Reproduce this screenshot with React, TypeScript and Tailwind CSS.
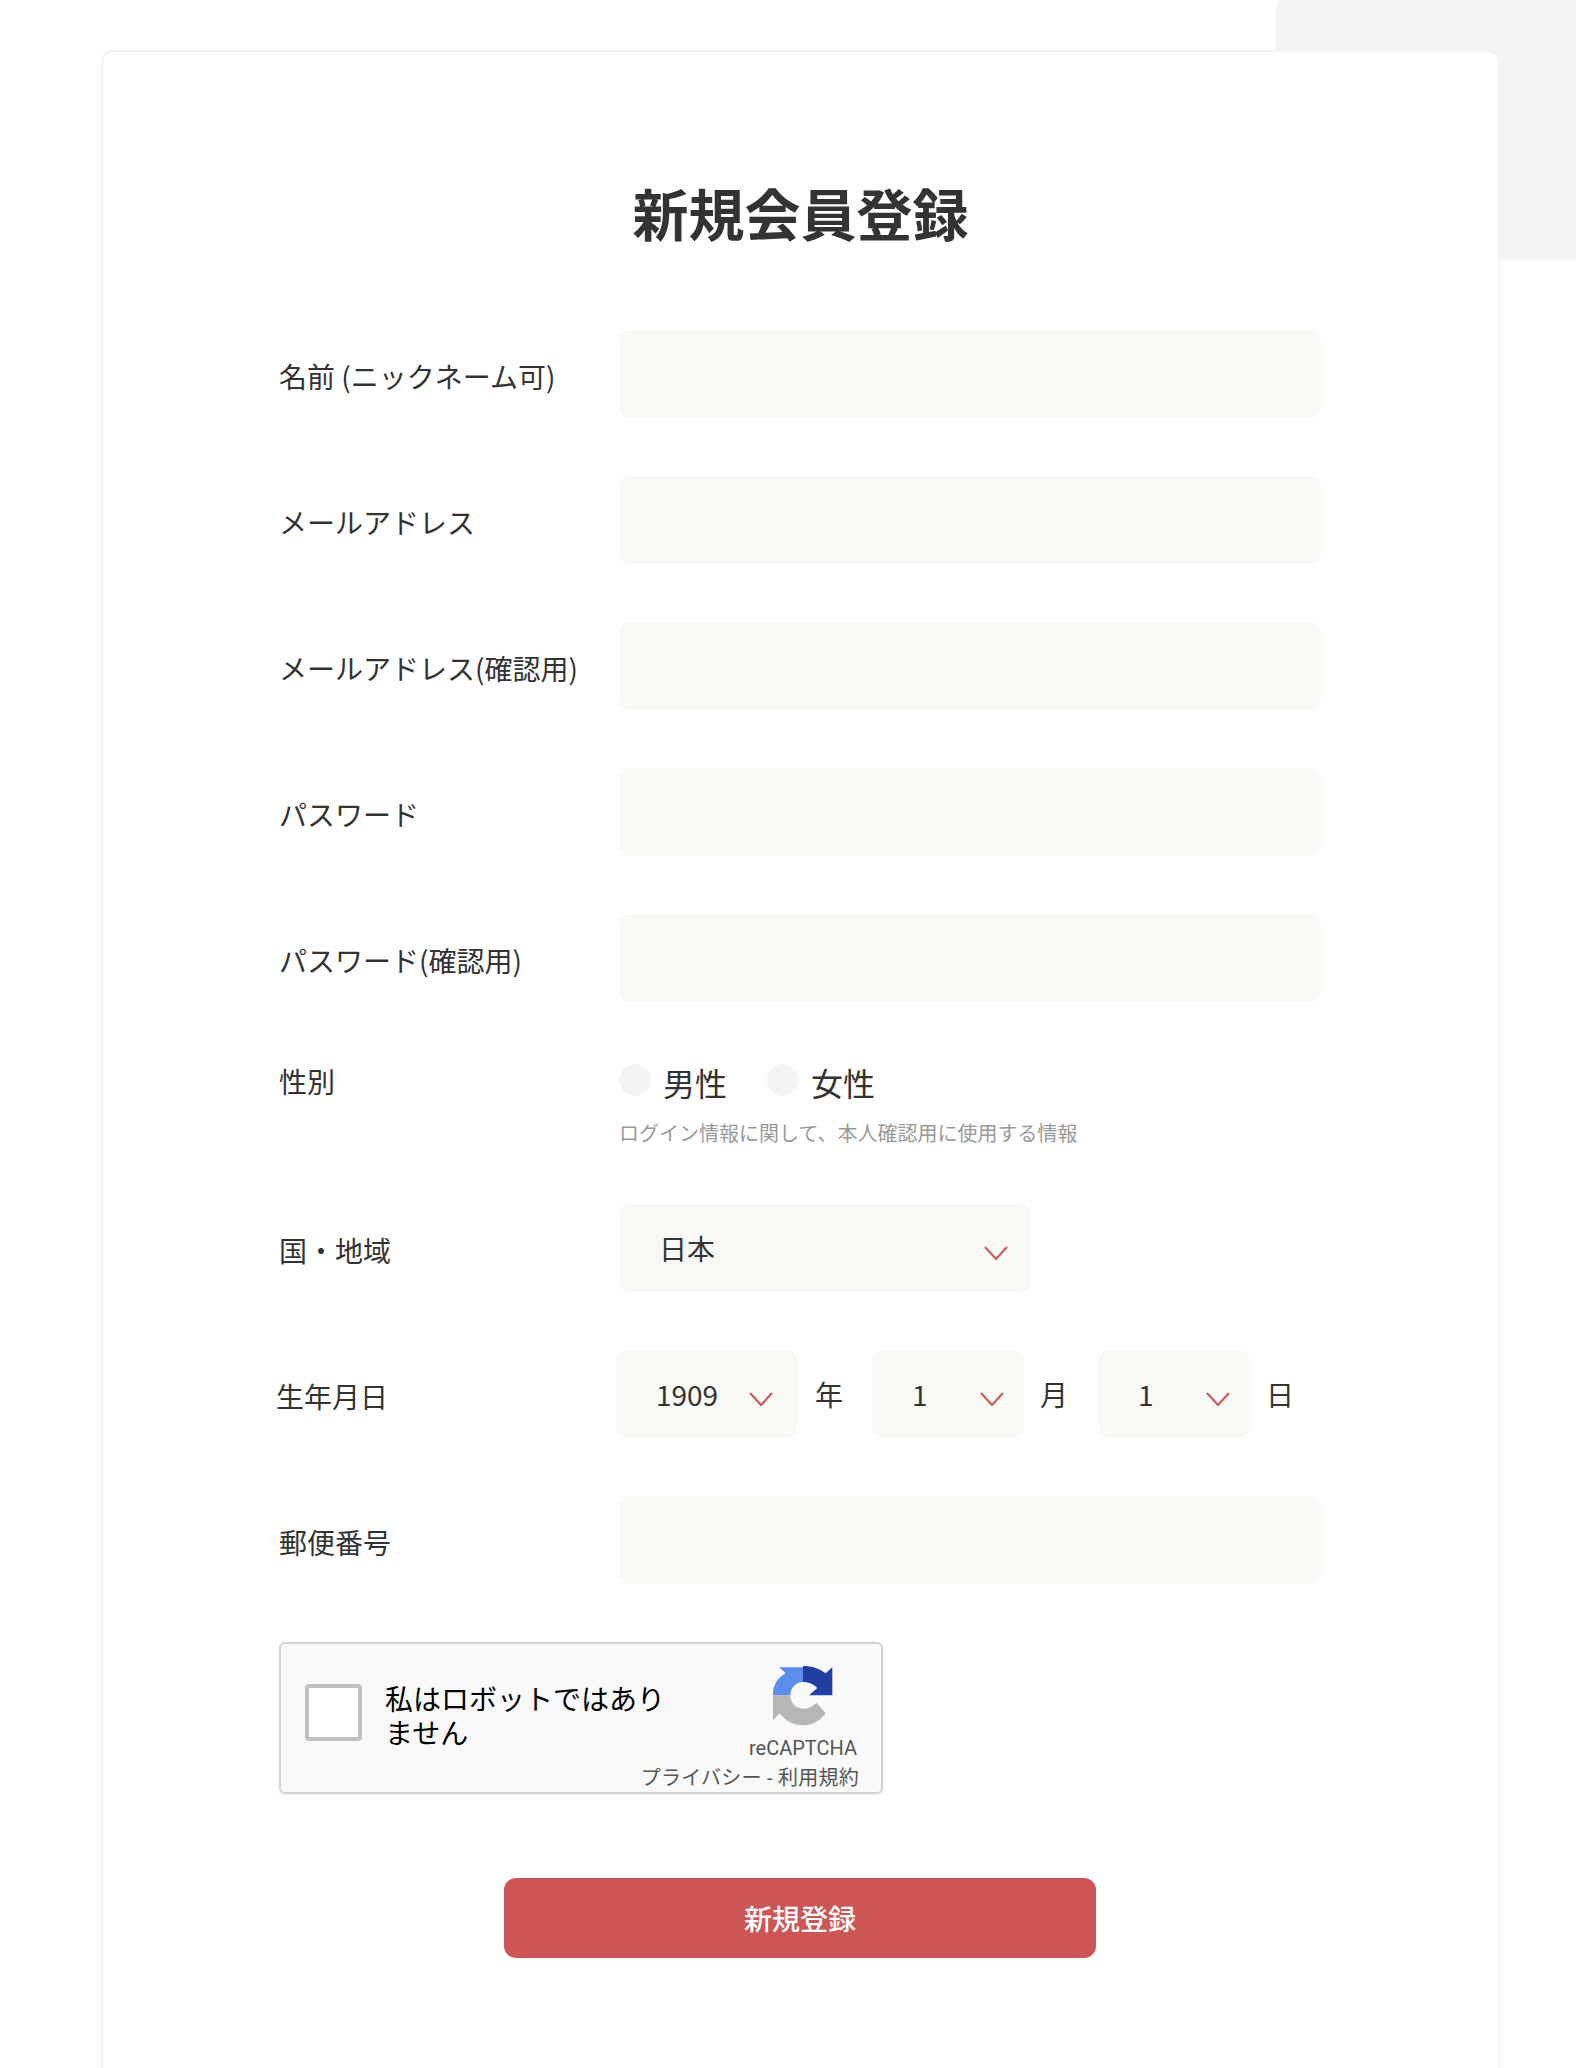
const inputClass = 'h-[88px] w-[702px] rounded-xl bg-[#f8f8f4] outline-none';
const selectClass =
    'relative flex h-[88px] items-center rounded-xl bg-[#f8f8f4] text-[28px] leading-none text-[#333]';

const Chevron = ({ className }: { className: string }) => (
    <svg viewBox="0 0 24 14" className={`absolute h-[14px] w-6 ${className}`} fill="none">
        <path d="M1 1l11 12L23 1" stroke="#cd5555" strokeWidth="2" />
    </svg>
);

const InputRow = ({ label }: { label: string }) => (
    <div className="mb-[58px] flex items-center">
        <label className="mt-[4px] w-[340px] text-[28px] leading-10 whitespace-nowrap">{label}</label>
        <input type="text" className={inputClass} />
    </div>
);

const Radio = ({ label, className }: { label: string; className: string }) => (
    <label className={`flex items-start ${className}`}>
        <input
            type="radio"
            name="gender"
            className="h-8 w-8 appearance-none rounded-full bg-[#f5f4f2]"
        />
        <span className="mt-[-4px] ml-3 text-[32px] leading-[44px]">{label}</span>
    </label>
);

const RecaptchaLogo = () => (
    <svg viewBox="160 50 180 180" className="h-[60px] w-[60px]">
        <path
            d="M160 138C160 110 170 88 198 72L178 54H250V98C228 98 212 116 212 138Z"
            fill="#5b8def"
        />
        <path
            d="M250 50C278 50 300 58 318 72L338 54V138H268L293 116C282 105 268 98 250 98Z"
            fill="#233ea2"
        />
        <path
            d="M160 138H212C212 162 228 178 250 178C266 178 280 172 290 160L318 192C300 216 278 228 250 228C222 228 198 216 180 192L160 212Z"
            fill="#b6b6b6"
        />
    </svg>
);

const App = () => {
    return (
        <div className="relative h-[2068px] overflow-hidden bg-white font-['Noto_Sans_CJK_JP','Noto_Sans',sans-serif] text-[#333]">
            <div className="absolute top-[-10px] right-0 h-[270px] w-[301px] rounded-tl-[24px] bg-[#f5f4f2]" />
            <main className="relative mt-[50px] ml-[101px] h-[2100px] w-[1399px] rounded-xl border-2 border-[#f5f4f2] bg-white pt-[126px] pl-[176px]">
                <h1 className="mb-[84px] ml-[-176px] text-center text-[56px] leading-[68px] font-bold">
                    新規会員登録
                </h1>

                <InputRow label="名前 (ニックネーム可)" />
                <InputRow label="メールアドレス" />
                <InputRow label="メールアドレス(確認用)" />
                <InputRow label="パスワード" />
                <InputRow label="パスワード(確認用)" />

                <div className="flex pt-[4px]">
                    <div className="mt-[-3px] w-[340px] text-[28px] leading-10">性別</div>
                    <div>
                        <div className="flex">
                            <Radio label="男性" className="w-[148px]" />
                            <Radio label="女性" className="" />
                        </div>
                        <p className="mt-[15px] text-[20px] leading-7 text-[#999]">
                            ログイン情報に関して、本人確認用に使用する情報
                        </p>
                    </div>
                </div>

                <div className="mt-[57px] mb-[58px] flex items-center">
                    <label className="mt-[4px] w-[340px] text-[28px] leading-10">国・地域</label>
                    <div className={`${selectClass} w-[412px] pl-[40px]`}>
                        日本
                        <Chevron className="top-[42px] right-[23px]" />
                    </div>
                </div>

                <div className="mb-[58px] ml-[-3px] flex items-center">
                    <label className="mt-[4px] w-[340px] text-[28px] leading-10">生年月日</label>
                    <div className={`${selectClass} w-[182px] pl-[40px]`}>
                        1909
                        <Chevron className="top-[42px] right-[25px]" />
                    </div>
                    <span className="w-[74px] pl-[17px] text-[28px]">年</span>
                    <div className={`${selectClass} w-[152px] pl-[40px]`}>
                        1
                        <Chevron className="top-[42px] right-[20px]" />
                    </div>
                    <span className="w-[74px] pl-[16px] text-[28px]">月</span>
                    <div className={`${selectClass} w-[152px] pl-[40px]`}>
                        1
                        <Chevron className="top-[42px] right-[20px]" />
                    </div>
                    <span className="pl-[16px] text-[28px]">日</span>
                </div>

                <InputRow label="郵便番号" />

                <div className="relative flex h-[152px] w-[604px] rounded-md border-2 border-[#d3d3d3] bg-[#f9f9f9] shadow-[0_1px_3px_rgba(0,0,0,0.08)]">
                    <div className="mt-[40px] ml-[24px] h-[57px] w-[57px] rounded border-4 border-[#c1c1c1] bg-white" />
                    <div className="mt-[40px] ml-[23px] w-[285px] font-['Roboto','Noto_Sans_CJK_JP',sans-serif] text-[28px] leading-[34px] text-black">
                        私はロボットではありません
                    </div>
                    <div className="absolute top-[22px] right-[48px]">
                        <RecaptchaLogo />
                    </div>
                    <div className="absolute top-[92px] right-[24px] font-['Roboto',sans-serif] text-[20px] leading-6 text-[#555]">
                        reCAPTCHA
                    </div>
                    <div className="absolute right-[22px] bottom-0 font-['Roboto','Noto_Sans_CJK_JP',sans-serif] text-[20px] leading-7 tracking-[0.25px] whitespace-nowrap text-[#555]">
                        プライバシー - 利用規約
                    </div>
                </div>

                <button className="mt-[84px] ml-[225px] block h-[80px] w-[592px] rounded-xl bg-[#cd5555] text-[28px] font-medium text-white">
                    新規登録
                </button>
            </main>
        </div>
    );
};

export default App;
